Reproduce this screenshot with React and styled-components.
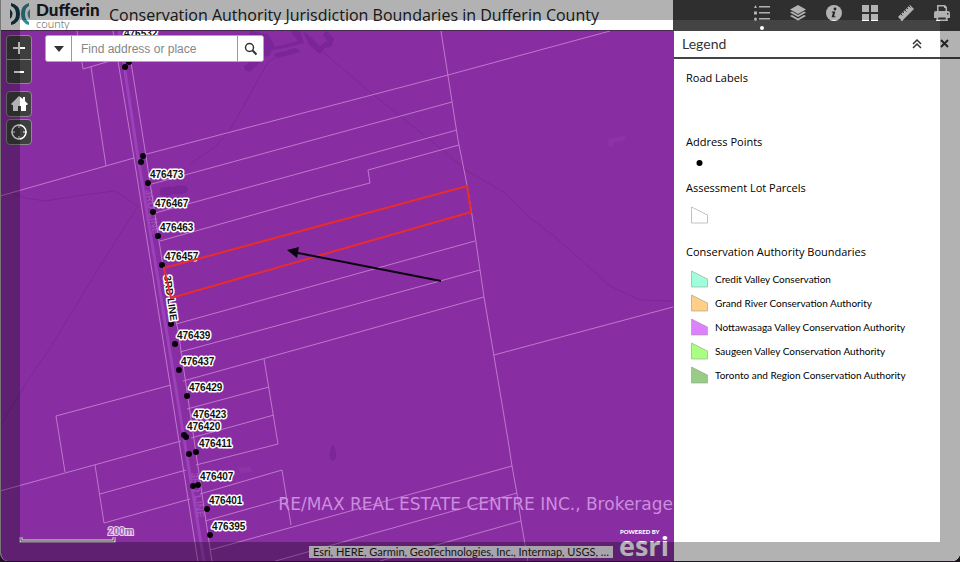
import React from "react";
import styled, { createGlobalStyle } from "styled-components";

const GlobalStyle = createGlobalStyle`
  * { box-sizing: border-box; }
  html, body, #root { height: 100%; margin: 0; }
  body { background: #1c1420; overflow: hidden; font-family: Lato, "Open Sans", sans-serif; color: #111; }
  button, input { font: inherit; margin: 0; }
`;

const Window = styled.div`
  position: relative;
  display: grid;
  grid-template-columns: minmax(0, 1fr) 287px;
  grid-template-rows: 30px minmax(0, 1fr);
  height: calc(100% - 1px);
  border-left: 1px solid #777;
  border-radius: 0 0 8px 8px;
  overflow: hidden;
  background: #fff;
`;

const Frame = styled.div`
  position: absolute;
  inset: 0;
  border: 20px solid rgba(0, 0, 0, 0.3);
  pointer-events: none;
  z-index: 5;
  margin: 0 0 -1px -1px;
`;

const Header = styled.header`
  display: flex;
  align-items: center;
  gap: 8px;
  padding-left: 8px;
  background: #fff;
  overflow: hidden;
  white-space: nowrap;
`;

const Brand = styled.div`
  display: flex;
  gap: 5px;
  align-items: flex-start;
  height: 30px;
`;

const BrandText = styled.div`
  display: flex;
  flex-direction: column;
  width: 65px;
  padding-top: 1px;
`;

const BrandName = styled.span`
  font: 900 17px/17px Lato, sans-serif;
  color: #1c2027;
`;

const BrandSub = styled.span`
  font: 300 11px/11px "Open Sans", sans-serif;
  color: #555;
`;

const Title = styled.h1`
  margin: 0;
  font-family: "Open Sans", sans-serif;
  font-size: 16px;
  font-weight: 400;
  line-height: 30px;
  color: #222;
`;

const Toolbar = styled.nav`
  display: flex;
  justify-content: flex-end;
  background: #444;
`;

const Tool = styled.button`
  position: relative;
  display: flex;
  align-items: center;
  justify-content: center;
  width: 36px;
  height: 30px;
  padding: 0 0 4px;
  border: 0;
  background: none;
  color: #fff;

  &::after {
    content: "";
    display: ${(p) => (p.$active ? "block" : "none")};
    position: absolute;
    left: 16px;
    bottom: 0;
    width: 4px;
    height: 4px;
    border-radius: 50%;
    background: #fff;
  }
`;

const MapArea = styled.main`
  position: relative;
  display: flex;
  flex-direction: column;
  justify-content: space-between;
  border-top: 1px solid #4a2a55;
  background: #892ea2;
  overflow: hidden;
`;

const MapDrawing = styled.svg`
  position: absolute;
  inset: 0;
  width: 100%;
  height: 100%;
  text {
    font: 700 10px "Liberation Sans", Arial, sans-serif;
  }
`;

const MapTop = styled.div`
  position: relative;
  display: flex;
  align-items: flex-start;
  gap: 13px;
  padding: 4px 5px;
`;

const Controls = styled.div`
  display: flex;
  flex-direction: column;
  gap: 7px;
`;

const ButtonStack = styled.div`
  display: flex;
  flex-direction: column;
  gap: 2px;
`;

const ZoomGroup = styled.div`
  display: flex;
  flex-direction: column;
  gap: 1px;
  background: #999;
  border: 1px solid #8b8b8b;
  border-radius: 4px;
  overflow: hidden;
`;

const MapButton = styled.button`
  display: flex;
  align-items: center;
  justify-content: center;
  width: ${(p) => (p.$single ? "26px" : "24px")};
  height: ${(p) => (p.$single ? "26px" : "23px")};
  padding: 0;
  border: ${(p) => (p.$single ? "1px solid #8b8b8b" : "0")};
  border-radius: ${(p) => (p.$single ? "4px" : "0")};
  background: #403f40;
  color: #fff;
`;

const Search = styled.form`
  display: flex;
  height: 27px;
  width: 219px;
  background: #fff;
  border: 1px solid #aaa;
  border-radius: 3px;
  overflow: hidden;
`;

const SearchButton = styled.button`
  display: flex;
  align-items: center;
  justify-content: center;
  width: 25px;
  padding: 0;
  border: 0;
  background: #fff;
`;

const SearchInput = styled.input`
  flex: 1;
  min-width: 0;
  padding: 0 9px;
  border: 1px solid #999;
  border-width: 0 1px;
  outline: 0;
  font: 12px "Liberation Sans", Arial, sans-serif;
  &::placeholder { color: #868686; opacity: 1; }
`;

const MapBottom = styled.div`
  position: relative;
  display: flex;
  flex-direction: column;
  align-items: flex-end;
`;

const Watermark = styled.p`
  margin: 0;
  font: 17px/20px "DejaVu Sans", sans-serif;
  color: #cb8ddd;
  white-space: nowrap;
`;

const Credits = styled.div`
  display: flex;
  align-items: flex-end;
  gap: 6px;
  padding: 14px 5px 0 0;
`;

const Attribution = styled.span`
  margin-bottom: 3px;
  padding: 0 4px;
  background: rgba(255, 255, 255, 0.9);
  font-size: 11px;
  line-height: 12px;
  color: #222;
  white-space: nowrap;
`;

const EsriLink = styled.a`
  display: flex;
  flex-direction: column;
  align-items: flex-start;
  width: 49px;
  padding-bottom: 5px;
  color: #fff;
  text-decoration: none;
`;

const Powered = styled.span`
  padding-left: 1px;
  font: 900 6px/8px Lato, sans-serif;
  white-space: nowrap;
`;

const Esri = styled.span`
  font: 700 27px/20px "Open Sans", sans-serif;
`;

const Panel = styled.aside`
  display: flex;
  flex-direction: column;
  min-height: 0;
  border-top: 1px solid #444;
  border-left: 1px solid #555;
  background: #fff;
`;

const PanelHeader = styled.div`
  display: flex;
  align-items: center;
  gap: 10px;
  height: 28px;
  padding: 0 6px 0 8px;
  border-bottom: 2px solid #444;
`;

const PanelTitle = styled.h2`
  flex: 1;
  margin: 0;
  font-size: 14px;
  font-weight: 400;
  line-height: 28px;
  color: #333;
`;

const PanelButton = styled.button`
  display: flex;
  align-items: center;
  justify-content: center;
  width: 18px;
  height: 18px;
  padding: 0;
  border: 0;
  background: none;
`;

const LegendBody = styled.div`
  padding: 9px 12px;
`;

const Layer = styled.section`
  min-height: ${(p) => p.$height || "0"};
`;

const LayerTitle = styled.h3`
  margin: 0;
  font-family: "Open Sans", sans-serif;
  font-size: 11px;
  font-weight: 400;
  line-height: 20px;
  color: #000;
`;

const SymbolRow = styled.div`
  display: flex;
  align-items: center;
  height: ${(p) => p.$height};
  padding-left: 5px;
`;

const SymbolList = styled.ul`
  list-style: none;
  margin: 5px 0 0;
  padding: 0 0 0 5px;
`;

const SymbolItem = styled.li`
  display: flex;
  align-items: center;
  gap: 7px;
  height: 24px;
  font-size: 10px;
  color: #000;
  white-space: nowrap;
`;

const Swatch = ({ fill, stroke = "#999" }) => (
  <svg width="17" height="18" viewBox="0 0 17 18" aria-hidden="true">
    <path d="M.5 1v16h16V9z" fill={fill} stroke={stroke} strokeOpacity=".6" />
  </svg>
);

const authorities = [
  ["Credit Valley Conservation", "#9fffdc"],
  ["Grand River Conservation Authority", "#ffcf87"],
  ["Nottawasaga Valley Conservation Authority", "#dc82ff"],
  ["Saugeen Valley Conservation Authority", "#a9ff80"],
  ["Toronto and Region Conservation Authority", "#98cc85"],
];

const addresses = [
  ["476532", 124, 37],
  ["476473", 150, 178], ["476467", 155, 207], ["476463", 160, 231],
  ["476457", 165, 260], ["476439", 177, 339], ["476437", 181, 365],
  ["476429", 189, 391], ["476423", 193, 418], ["476420", 187, 430],
  ["476411", 199, 447], ["476407", 200, 480], ["476401", 209, 504],
  ["476395", 212, 530],
];

const points = [
  [125, 67], [129, 62], [143, 156], [141, 162], [148, 183], [153, 212], [158, 236],
  [162, 265], [171, 324], [175, 344], [179, 370], [187, 396], [184, 435],
  [186, 437], [189, 454], [196, 452], [193, 486], [198, 485], [207, 509], [210, 535],
];

const parcels = [
  "M441 31 458 140 467 185 472 215 484 297 498 380 508 440 512 466 517 494 521 521 528 562",
  "M0 196 134 158M143 155 448 75 610 31",
  "M148 185 452 102M155 213 457 130M160 241 320 196 370 183 368 170 459 145",
  "M176 324 320 284 475 241M180 352 320 314 480 270M183 381 320 343 484 297",
  "M494 355 673 307",
  "M264 359 278 444 196 465M187 409 269 387M191 438 274 415",
  "M200 494 282 470 291 525M205 521 287 498M210 550 512 466M272 562 517 493M380 561 521 521",
  "M171 385 56 416 65 472M0 491 181 441M95 465 104 523 190 499M100 494 186 470",
  "M77 31 83 69 110 61M91 67 106 166",
  "M113 31 134 158 163 340 198 562M126 31 145 150 162 260 178 330 197 460 212 562",
];

const MapView = () => (
  <MapDrawing viewBox="1 31 672 530" preserveAspectRatio="xMinYMin slice" role="img" aria-label="Map of lot parcels along 3rd Line">
    <g fill="#7a2598">
      <path d="M250 31 247 48 254 58 269 56 272 50 285 48 304 43 300 31 290 31 298 41 275 47 268 34z" />
      <path d="M244 66 252 60 262 60 250 72 245 70zM274 54 296 48 301 52 277 58zM303 31 309 45 320 54 325 48 331 47 334 39 327 31 323 34 327 41 320 46 312 38z" />
      <path d="M160 189q3-3 12-2 9-3 14-1 4 4-1 7-7 2-12 1-7 4-13 1zM331 448q2-6 4 1 3 9-2 12-6-2-2-13z" />
    </g>
    <g fill="#8d34a8">
      <path d="M608 139 625 136 625 140 613 143 613 147 609 147z" />
      <path d="M238 468 250 466 252 472 240 473z" />
    </g>
    <g fill="none" stroke="#7c2796" strokeWidth="1">
      <path d="M8 192 25 198 45 201 90 194 115 191 138 206 100 266 72 312 52 345 25 385 1 424" />
      <path d="M190 164 215 147 230 130 268 62 280 54M323 52 370 92 440 148 466 170 505 193 530 218 555 237 590 268 610 286 640 300 673 301" />
    </g>
    <path d="M119 31 138 158 168 340 204 562" fill="none" stroke="#9b41b9" strokeWidth="3" />
    <g fill="#a653bf">
      <text transform="translate(145 190) rotate(80)" fillOpacity=".8">3RD LINE</text>
      <text transform="translate(191 473) rotate(82)" fillOpacity=".8">3RD LINE</text>
    </g>
    <g fill="none" stroke="#be78cc" strokeWidth="1">
      {parcels.map((d) => <path key={d} d={d} />)}
    </g>
    <g fill="#060308">
      {points.map(([x, y]) => <circle key={`${x}-${y}`} cx={x} cy={y} r="3" />)}
    </g>
    <g fill="#111" stroke="#fff" strokeWidth="3" strokeLinejoin="round" paintOrder="stroke">
      {addresses.map(([t, x, y]) => <text key={t} x={x} y={y}>{t}</text>)}
      <text transform="translate(164 276) rotate(82)">3RD LINE</text>
    </g>
    <path d="M164 268 467 186 471 212 171 298z" fill="none" stroke="#e82c2c" strokeWidth="2" />
    <path d="M441 281 293 252" stroke="#0b0410" strokeWidth="2" />
    <path d="M287 250 299 247 297 258z" fill="#0b0410" />
    <path d="M21 537v4h93v-4" fill="none" stroke="#ddd" strokeWidth="3" />
    <path d="M21 537v4h93v-4" fill="none" stroke="#444" strokeWidth="1" />
    <text x="108" y="535" fill="#a05bb4" stroke="#fff" strokeWidth="2" strokeOpacity=".8" paintOrder="stroke">200m</text>
  </MapDrawing>
);

export default function App() {
  return (
    <>
      <GlobalStyle />
      <Window>
        <Header>
          <Brand>
            <svg width="22" height="28" viewBox="0 0 22 28" aria-hidden="true">
              <path d="M2 3q9 2 9 11T2 25v-3q5-2 5-8T2 6z" fill="#173c4e" />
              <path d="M20 3q-8 2-8 11t8 11v-3q-4-2-4-8t4-8z" fill="#358a96" />
              <path d="M1 9q5 5 0 10z" fill="#173c4e" />
              <path d="M21 9q-5 5 0 10z" fill="#4c98a1" />
            </svg>
            <BrandText>
              <BrandName>Dufferin</BrandName>
              <BrandSub>county</BrandSub>
            </BrandText>
          </Brand>
          <Title>Conservation Authority Jurisdiction Boundaries in Dufferin County</Title>
        </Header>

        <Toolbar aria-label="Map tools">
          <Tool $active aria-label="Legend">
            <svg width="18" height="18" viewBox="0 0 18 18" fill="currentColor">
              <path d="M6 2h11v1.500H6zM6 8h11v1.500H6zM6 14h11v1.500H6zM2.500 1 4 4H1zM1 7.500h3v3H1z" />
              <circle cx="2.500" cy="15" r="1.500" />
            </svg>
          </Tool>
          <Tool aria-label="Layers">
            <svg width="18" height="18" viewBox="0 0 18 18" fill="currentColor">
              <path d="M9 1 17 5.500 9 10 1 5.500zM1 8.500l2-1 6 3.500 6-3.500 2 1L9 13zM1 12l2-1 6 3.500 6-3.500 2 1-8 4.500z" />
            </svg>
          </Tool>
          <Tool aria-label="About">
            <svg width="18" height="18" viewBox="0 0 18 18">
              <circle cx="9" cy="9" r="8" fill="currentColor" />
              <path d="M7 7.500h3.300L9 12.500l1.500-.5-.3 1.300H6.600L8 8.500l-1.300.2z" fill="#333" />
              <circle cx="10" cy="5" r="1.400" fill="#333" />
            </svg>
          </Tool>
          <Tool aria-label="Basemap gallery">
            <svg width="18" height="18" viewBox="0 0 18 18" fill="currentColor">
              <path d="M1 1h7v7H1zM10 1h7v7h-7zM1 10h7v7H1zM10 10h7v7h-7z" />
            </svg>
          </Tool>
          <Tool aria-label="Measurement">
            <svg width="18" height="18" viewBox="0 0 18 18">
              <path d="M13 1 17 5 5 17 1 13z" fill="currentColor" />
              <path d="m4 10 1.500 1.500M6 8l1 1M8 6l1.500 1.500M10 4l1 1M12 2l1.500 1.500" stroke="#444" />
            </svg>
          </Tool>
          <Tool aria-label="Print">
            <svg width="18" height="18" viewBox="0 0 18 18" fill="currentColor">
              <path d="M4 7V1h8l2 2v4h-1.500V4H11V2.500H5.500V7z" />
              <path fillRule="evenodd" d="M1 9q0-2 2-2h12q2 0 2 2v5h-3v-2H4v2H1zM14 9v1.500h1.500V9z" />
              <path fillRule="evenodd" d="M4 12h10l1 5H3zM5.500 13.500l-.5 2h8l-.5-2z" />
            </svg>
          </Tool>
        </Toolbar>

        <MapArea>
          <MapView />
          <MapTop>
            <Controls>
              <ZoomGroup>
                <MapButton aria-label="Zoom in">
                  <svg width="14" height="14" stroke="currentColor" strokeWidth="2"><path d="M1 7h12M7 1v12" /></svg>
                </MapButton>
                <MapButton aria-label="Zoom out">
                  <svg width="14" height="14" stroke="currentColor" strokeWidth="2"><path d="M2 7h10" /></svg>
                </MapButton>
              </ZoomGroup>
              <ButtonStack>
                <MapButton $single aria-label="Default extent">
                  <svg width="18" height="18" fill="currentColor"><path d="M9 1 1 9l1 1h1v6h5v-5h3v5h5v-6h1l1-1-3-3V2h-2v2z" /></svg>
                </MapButton>
                <MapButton $single aria-label="My location">
                  <svg width="18" height="18" fill="none" stroke="currentColor">
                    <circle cx="9" cy="9" r="7" strokeWidth="1.500" />
                    <path d="M9 1v4M9 13v4M1 9h4M13 9h4" />
                  </svg>
                </MapButton>
              </ButtonStack>
            </Controls>
            <Search onSubmit={(e) => e.preventDefault()}>
              <SearchButton type="button" aria-label="Search source">
                <svg width="12" height="8"><path d="M1 1h10L6 7z" fill="#333" /></svg>
              </SearchButton>
              <SearchInput aria-label="Find address or place" placeholder="Find address or place" />
              <SearchButton type="submit" aria-label="Search">
                <svg width="14" height="14" fill="none" stroke="#333">
                  <circle cx="5.500" cy="5.500" r="4" strokeWidth="1.500" />
                  <path d="m8.500 8.500 4 4" strokeWidth="2" />
                </svg>
              </SearchButton>
            </Search>
          </MapTop>
          <MapBottom>
            <Watermark>RE/MAX REAL ESTATE CENTRE INC., Brokerage</Watermark>
            <Credits>
              <Attribution>Esri, HERE, Garmin, GeoTechnologies, Inc., Intermap, USGS, …</Attribution>
              <EsriLink href="#esri" aria-label="Powered by Esri">
                <Powered>POWERED BY</Powered>
                <Esri>esri</Esri>
              </EsriLink>
            </Credits>
          </MapBottom>
        </MapArea>

        <Panel>
          <PanelHeader>
            <PanelTitle>Legend</PanelTitle>
            <PanelButton aria-label="Collapse">
              <svg width="10" height="10" fill="none" stroke="#333" strokeWidth="1.500"><path d="m1 5 4-4 4 4M1 9l4-4 4 4" /></svg>
            </PanelButton>
            <PanelButton aria-label="Close">
              <svg width="10" height="10" stroke="#333" strokeWidth="2"><path d="m1 1 7 7M8 1 1 8" /></svg>
            </PanelButton>
          </PanelHeader>
          <LegendBody>
            <Layer $height="64px"><LayerTitle>Road Labels</LayerTitle></Layer>
            <Layer $height="46px">
              <LayerTitle>Address Points</LayerTitle>
              <SymbolRow $height="22px">
                <svg width="17" height="6"><circle cx="8.500" cy="3" r="3" /></svg>
              </SymbolRow>
            </Layer>
            <Layer $height="64px">
              <LayerTitle>Assessment Lot Parcels</LayerTitle>
              <SymbolRow $height="34px"><Swatch fill="#fff" /></SymbolRow>
            </Layer>
            <Layer>
              <LayerTitle>Conservation Authority Boundaries</LayerTitle>
              <SymbolList>
                {authorities.map(([name, color]) => (
                  <SymbolItem key={name}><Swatch fill={color} />{name}</SymbolItem>
                ))}
              </SymbolList>
            </Layer>
          </LegendBody>
        </Panel>
        <Frame />
      </Window>
    </>
  );
}
